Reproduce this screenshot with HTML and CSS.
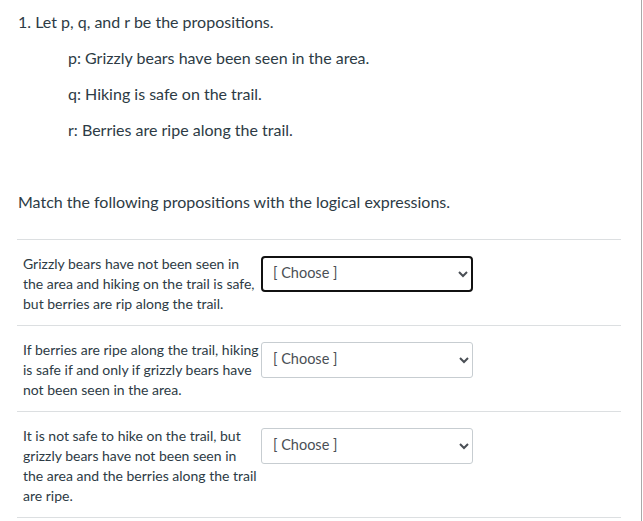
FILE: index.html
```html
<!DOCTYPE html>
<html>
<head>
<meta charset="utf-8">
<link rel="stylesheet" href="styles.css">
</head>
<body>
<div class="frame">
  <div class="question">
    <p class="lead">1. Let p, q, and r be the propositions.</p>
    <p class="prop">p: Grizzly bears have been seen in the area.</p>
    <p class="prop">q: Hiking is safe on the trail.</p>
    <p class="prop">r: Berries are ripe along the trail.</p>
    <p class="instr">Match the following propositions with the logical expressions.</p>
    <div class="answers">
      <div class="answer">
        <div class="label">Grizzly bears have not been seen in the area and hiking on the trail is safe, but berries are rip along the trail.</div>
        <select class="choose focused"><option>[ Choose ]</option></select>
      </div>
      <div class="answer">
        <div class="label">If berries are ripe along the trail, hiking is safe if and only if grizzly bears have not been seen in the area.</div>
        <select class="choose"><option>[ Choose ]</option></select>
      </div>
      <div class="answer">
        <div class="label">It is not safe to hike on the trail, but grizzly bears have not been seen in<br>the area and the berries along the trail are ripe.</div>
        <select class="choose"><option>[ Choose ]</option></select>
      </div>
    </div>
  </div>
</div>
</body>
</html>
```

FILE: styles.css
```css
html, body {
  margin: 0;
  padding: 0;
  background: #fff;
}
body {
  font-family: Lato, "Open Sans", sans-serif;
  color: #2d3b45;
}
.frame {
  width: 642px;
  height: 521px;
  box-sizing: border-box;
  border-right: 1px solid #a9a9a9;
  overflow: hidden;
}
.question {
  padding: 10px 0 0 17px;
  width: 604px;
}
.question p {
  margin: 0;
  font-size: 16px;
  line-height: 24px;
}
.lead {
  padding-left: 1px;
}
.question .prop {
  margin-top: 12px;
  padding-left: 51px;
}
.question .instr {
  margin-top: 48px;
  padding-left: 1px;
}
.answers {
  margin-top: 25px;
}
.answer {
  display: flex;
  align-items: flex-start;
  border-top: 1px solid #dcdfe1;
  padding: 14px 0 11px 6px;
}
.answer:last-child {
  border-bottom: 1px solid #dcdfe1;
}
.label {
  width: 238px;
  font-size: 14px;
  line-height: 20px;
}
.choose {
  margin-top: 2px;
  width: 212px;
  height: 36px;
  box-sizing: border-box;
  border: 1px solid #c7cdd1;
  border-radius: 3px;
  background: #fff;
  font-family: Lato, sans-serif;
  font-size: 14.5px;
  color: #4a4f55;
  padding: 0 6px 3px 7px;
}
.choose.focused {
  border: 2px solid #111;
  border-radius: 4px;
  padding-left: 6px;
}
```
